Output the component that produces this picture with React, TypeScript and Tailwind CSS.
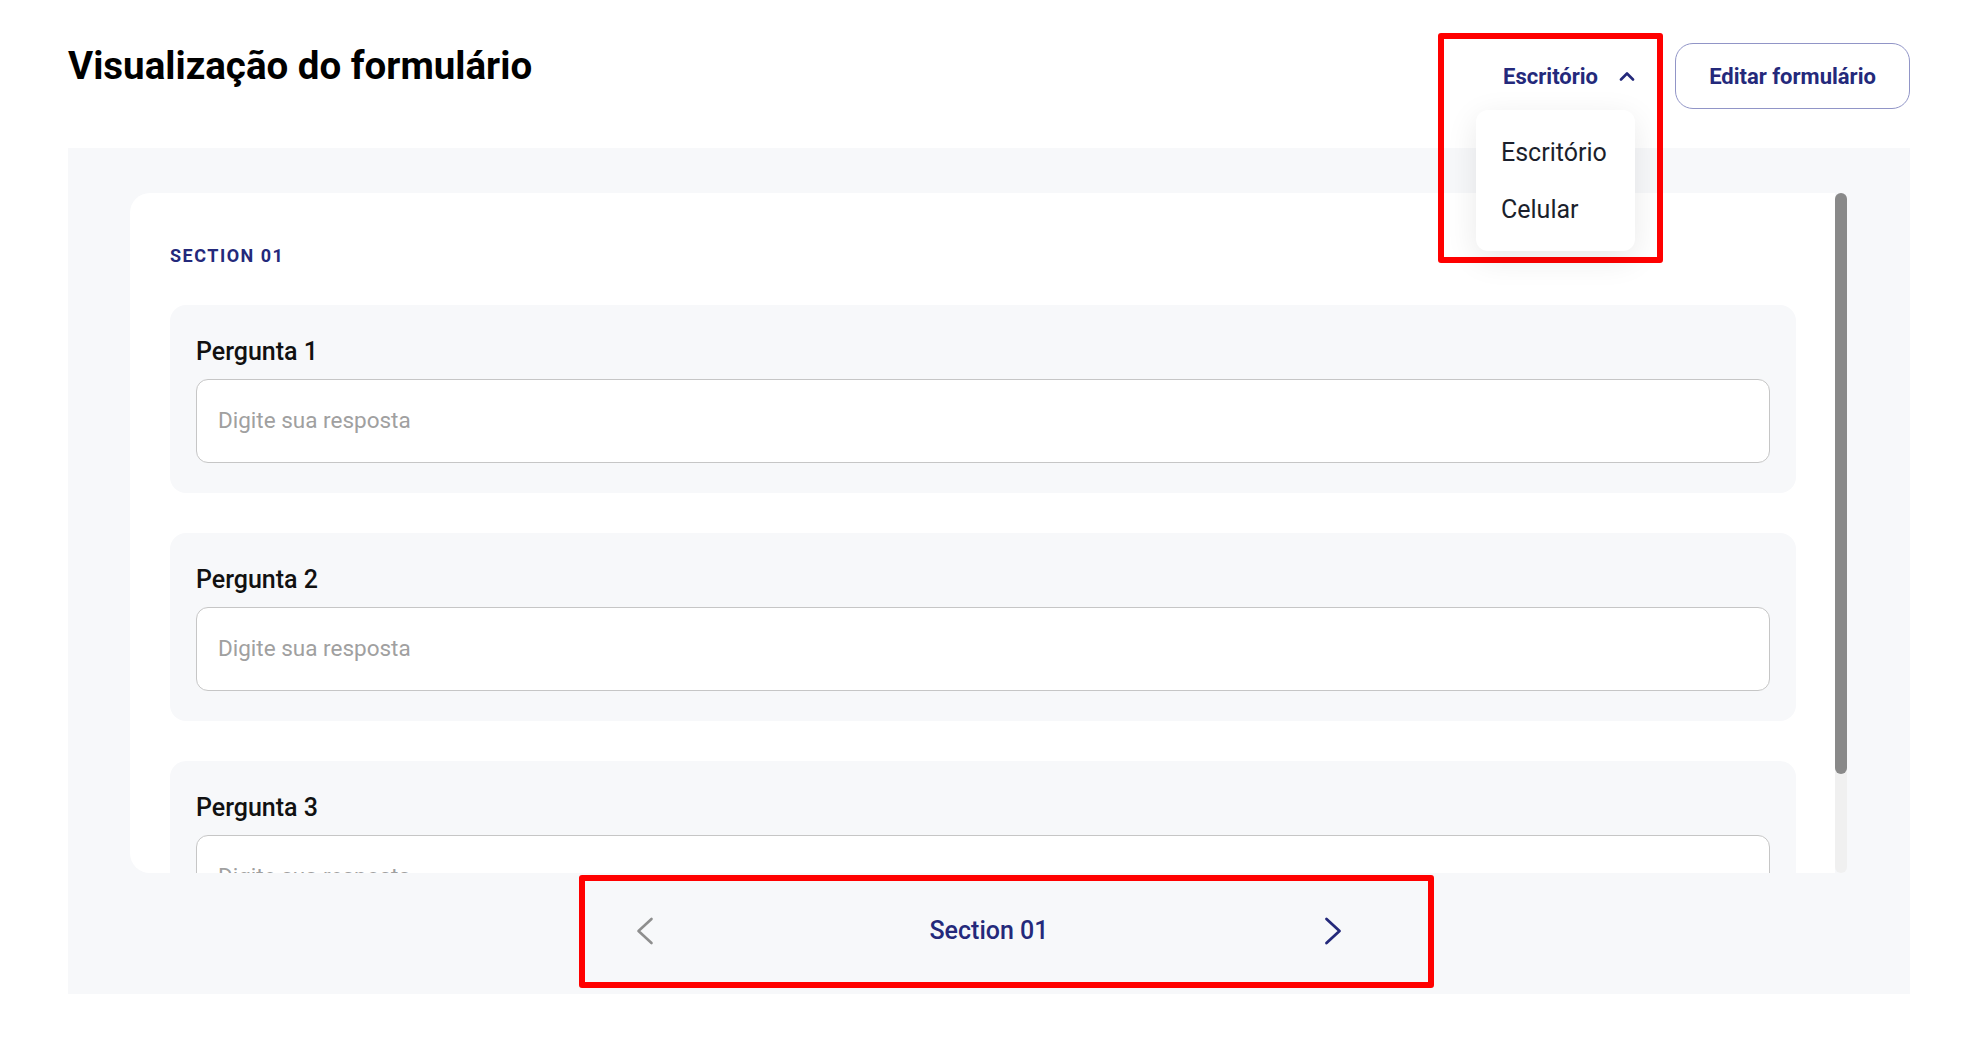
import React from 'react';

const NAVY = 'text-[#24297b]';

const questions = ['Pergunta 1', 'Pergunta 2', 'Pergunta 3'];

const ChevronUp = () => (
  <svg width="16" height="10" viewBox="0 0 16 10" fill="none" className="ml-[21px]">
    <polyline points="2,8.5 8,2.5 14,8.5" stroke="#24297b" strokeWidth="2.6" strokeLinecap="round" strokeLinejoin="round" />
  </svg>
);

const ChevronSide = ({ dir, color }: { dir: 'left' | 'right'; color: string }) => (
  <svg width="18" height="28" viewBox="0 0 18 28" fill="none">
    {dir === 'left' ? (
      <polyline points="15.5,2 2.5,14 15.5,26" stroke={color} strokeWidth="2.6" strokeLinecap="round" strokeLinejoin="round" />
    ) : (
      <polyline points="2.5,2 15.5,14 2.5,26" stroke={color} strokeWidth="2.8" strokeLinecap="round" strokeLinejoin="round" />
    )}
  </svg>
);

const QuestionBlock = ({ label }: { label: string }) => (
  <div className="shrink-0 rounded-[16px] bg-[#f7f8fa] px-[26px] pt-[29px] pb-[30px]">
    <p className="text-[25px] leading-[36px] font-medium text-[#111111]">{label}</p>
    <div className="mt-[9px] h-[84px] rounded-[12px] border border-[#c6c6c6] bg-white pl-[21px] flex items-center">
      <span className="text-[22.5px] text-[#a0a0a0]">Digite sua resposta</span>
    </div>
  </div>
);

export default function App() {
  return (
    <div className="relative w-full h-[1058px] bg-white font-['Roboto',sans-serif] overflow-hidden">
      {/* header */}
      <div className="h-[148px] flex justify-between items-start pl-[68px] pr-[56px]">
        <h1 className="mt-[42px] text-[38.5px] leading-[48px] font-bold text-black">Visualização do formulário</h1>

        <div className="mt-[43px] flex items-center">
          <div className="relative h-[66px] flex items-center">
            <span className={`text-[22px] font-bold ${NAVY}`}>Escritório</span>
            <ChevronUp />
            <div className="absolute right-0 top-full mt-[1px] w-[159px] rounded-[12px] bg-white pl-[25px] pt-[14px] pb-[13px] shadow-[0_8px_32px_rgba(0,0,0,0.09)] z-10">
              <p className="text-[25px] leading-[57px] text-[#1b1f2c]">Escritório</p>
              <p className="text-[25px] leading-[57px] text-[#1b1f2c]">Celular</p>
            </div>
          </div>
          <button className={`ml-[40px] w-[235px] h-[66px] rounded-[18px] border border-[#9195c7] bg-white text-[22px] font-bold ${NAVY}`}>
            Editar formulário
          </button>
        </div>
      </div>

      {/* preview panel */}
      <div className="mx-[68px] mr-[56px] h-[846px] bg-[#f7f8fa] pt-[45px] flex flex-col">
        <div className="ml-[62px] mr-[63px] h-[680px] flex">
          <div className="flex-1 bg-white rounded-l-[20px] overflow-hidden pl-[40px] pr-[39px] pt-[51px]">
            <p className={`text-[18px] leading-[24px] font-bold tracking-[1.5px] ${NAVY}`}>SECTION 01</p>
            <div className="mt-[37px] flex flex-col gap-[40px]">
              {questions.map((q) => (
                <QuestionBlock key={q} label={q} />
              ))}
            </div>
          </div>
          <div className="w-[12px] h-full rounded-full bg-[#f0f0f0] flex flex-col">
            <div className="h-[581px] rounded-full bg-[#898989]" />
          </div>
        </div>

        <div className="h-[121px] flex items-center justify-center pb-[6px]">
          <div className="w-[707px] flex items-center justify-between">
            <ChevronSide dir="left" color="#8e8e8e" />
            <span className={`text-[25px] font-medium ${NAVY}`}>Section 01</span>
            <ChevronSide dir="right" color="#24297b" />
          </div>
        </div>
      </div>

      {/* annotation boxes */}
      <div className="absolute left-[1438px] top-[33px] w-[225px] h-[230px] border-[6px] border-[#ff0000] rounded-[3px] pointer-events-none" />
      <div className="absolute left-[579px] top-[875px] w-[855px] h-[113px] border-[6px] border-[#ff0000] rounded-[3px] pointer-events-none" />
    </div>
  );
}
